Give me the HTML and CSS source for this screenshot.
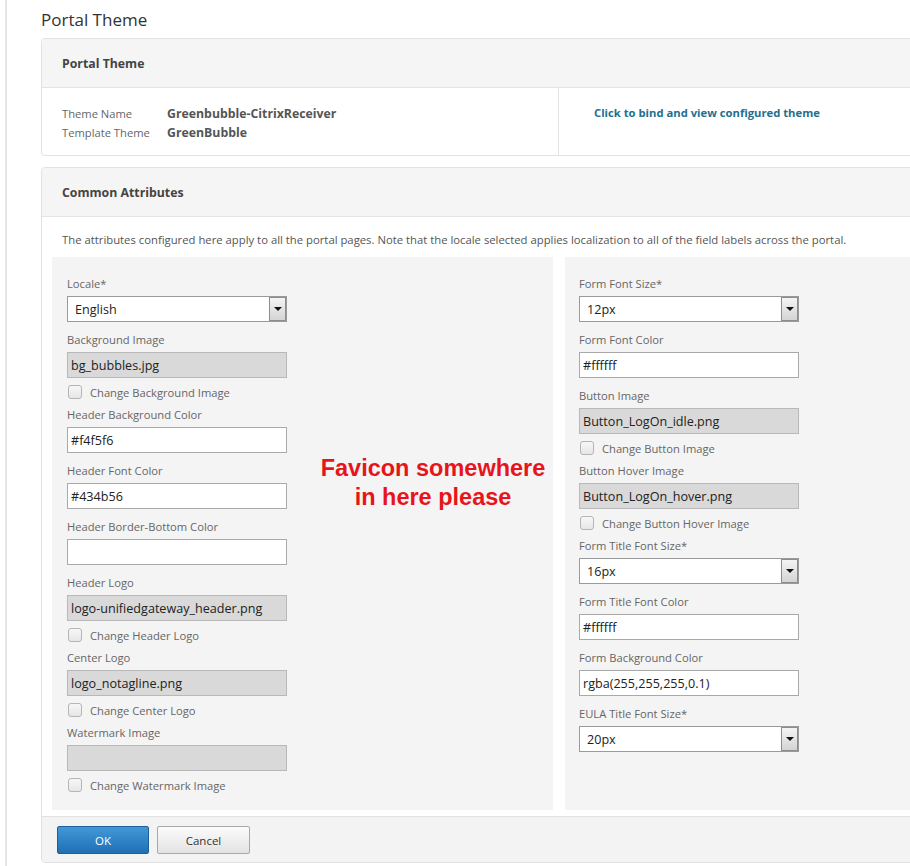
FILE: index.html
```html
<!DOCTYPE html>
<html>
<head>
<meta charset="utf-8">
<link rel="stylesheet" href="styles.css">
</head>
<body>
<div class="shell">
  <div class="rail"></div>
  <main class="main">
    <h1 class="page-title">Portal Theme</h1>

    <section class="panel">
      <header class="panel-head">Portal Theme</header>
      <div class="summary">
        <div class="info">
          <div class="info-row"><span class="k">Theme Name</span><span class="v">Greenbubble-CitrixReceiver</span></div>
          <div class="info-row"><span class="k">Template Theme</span><span class="v">GreenBubble</span></div>
        </div>
        <div class="bind"><a class="bind-link">Click to bind and view configured theme</a></div>
      </div>
    </section>

    <section class="panel panel-attrs">
      <header class="panel-head">Common Attributes</header>
      <p class="desc">The attributes configured here apply to all the portal pages. Note that the locale selected applies localization to all of the field labels across the portal.</p>
      <div class="cols">
        <div class="col col-left">
          <div class="field">
            <div class="label">Locale*</div>
            <div class="select"><span class="select-val">English</span><span class="select-btn"><span class="tri"></span></span></div>
          </div>
          <div class="field has-check">
            <div class="label">Background Image</div>
            <div class="input disabled">bg_bubbles.jpg</div>
            <label class="check"><span class="box"></span>Change Background Image</label>
          </div>
          <div class="field">
            <div class="label">Header Background Color</div>
            <div class="input">#f4f5f6</div>
          </div>
          <div class="field">
            <div class="label">Header Font Color</div>
            <div class="input">#434b56</div>
          </div>
          <div class="field">
            <div class="label">Header Border-Bottom Color</div>
            <div class="input"></div>
          </div>
          <div class="field has-check">
            <div class="label">Header Logo</div>
            <div class="input disabled">logo-unifiedgateway_header.png</div>
            <label class="check"><span class="box"></span>Change Header Logo</label>
          </div>
          <div class="field has-check">
            <div class="label">Center Logo</div>
            <div class="input disabled">logo_notagline.png</div>
            <label class="check"><span class="box"></span>Change Center Logo</label>
          </div>
          <div class="field has-check">
            <div class="label">Watermark Image</div>
            <div class="input disabled"></div>
            <label class="check"><span class="box"></span>Change Watermark Image</label>
          </div>
          <div class="note">Favicon somewhere<br>in here please</div>
        </div>
        <div class="col col-right">
          <div class="field">
            <div class="label">Form Font Size*</div>
            <div class="select"><span class="select-val">12px</span><span class="select-btn"><span class="tri"></span></span></div>
          </div>
          <div class="field">
            <div class="label">Form Font Color</div>
            <div class="input">#ffffff</div>
          </div>
          <div class="field has-check">
            <div class="label">Button Image</div>
            <div class="input disabled">Button_LogOn_idle.png</div>
            <label class="check"><span class="box"></span>Change Button Image</label>
          </div>
          <div class="field has-check">
            <div class="label">Button Hover Image</div>
            <div class="input disabled">Button_LogOn_hover.png</div>
            <label class="check"><span class="box"></span>Change Button Hover Image</label>
          </div>
          <div class="field">
            <div class="label">Form Title Font Size*</div>
            <div class="select"><span class="select-val">16px</span><span class="select-btn"><span class="tri"></span></span></div>
          </div>
          <div class="field">
            <div class="label">Form Title Font Color</div>
            <div class="input">#ffffff</div>
          </div>
          <div class="field">
            <div class="label">Form Background Color</div>
            <div class="input">rgba(255,255,255,0.1)</div>
          </div>
          <div class="field">
            <div class="label">EULA Title Font Size*</div>
            <div class="select"><span class="select-val">20px</span><span class="select-btn"><span class="tri"></span></span></div>
          </div>
        </div>
      </div>
      <footer class="panel-foot">
        <button class="btn btn-ok">OK</button>
        <button class="btn btn-cancel">Cancel</button>
      </footer>
    </section>
  </main>
</div>
</body>
</html>
```
FILE: styles.css
```css
html, body {
  margin: 0;
  padding: 0;
  background: #ffffff;
  overflow: hidden;
}
body {
  width: 910px;
  height: 866px;
  font-family: "Open Sans", "Noto Sans", sans-serif;
  color: #555;
}
.shell {
  display: flex;
  height: 866px;
}
.rail {
  width: 2px;
  margin-left: 5px;
  background: #e6e6e6;
  flex: none;
}
.main {
  margin-left: 34px;
  width: 900px;
  flex: none;
}
.page-title {
  margin: 0;
  height: 38px;
  line-height: 40px;
  font-size: 17px;
  font-weight: 400;
  color: #333;
}
.panel {
  border: 1px solid #e2e2e2;
  border-radius: 4px;
  background: #fff;
  margin-bottom: 11px;
}
.panel-head {
  height: 48px;
  line-height: 50px;
  background: #f5f5f5;
  border-bottom: 1px solid #e4e4e4;
  border-radius: 4px 4px 0 0;
  padding-left: 20px;
  font-size: 12.3px;
  font-weight: 700;
  color: #444;
}
.summary {
  display: flex;
  height: 67px;
}
.info {
  width: 496px;
  padding: 16px 0 0 20px;
  border-right: 1px solid #e4e4e4;
}
.info-row {
  display: flex;
  line-height: 19px;
  height: 19px;
}
.k {
  width: 105px;
  font-size: 11.2px;
  color: #666;
}
.v {
  font-size: 12.3px;
  font-weight: 700;
  color: #555;
}
.bind {
  padding: 14px 0 0 35px;
  line-height: 19px;
}
.bind-link {
  font-size: 11.25px;
  font-weight: 700;
  color: #23708f;
}
.desc {
  margin: 0;
  padding: 15px 0 0 20px;
  line-height: 16px;
  height: 16px;
  font-size: 11.3px;
  color: #555;
  white-space: nowrap;
  margin-bottom: 9px;
}
.cols {
  display: flex;
  gap: 12px;
  padding-left: 10px;
}
.col {
  background: #f4f4f4;
  padding: 19px 0 10px 15px;
}
.col-left {
  width: 486px;
  position: relative;
}
.col-right {
  flex: 1;
  padding-left: 14px;
}
.field {
  margin-bottom: 10px;
}
.label {
  line-height: 16px;
  height: 16px;
  font-size: 11.2px;
  color: #666;
  margin-bottom: 4px;
}
.input, .select {
  box-sizing: border-box;
  width: 220px;
  height: 26px;
  border: 1px solid #a9a9a9;
  background: #fff;
  font-size: 12.6px;
  line-height: 26px;
  color: #222;
  padding-left: 3px;
}
.input.disabled {
  background: #d9d9d9;
  border-color: #b8b8b8;
}
.select {
  display: flex;
  justify-content: space-between;
  padding-left: 7px;
  border-color: #9a9a9a;
}
.select-btn {
  box-sizing: border-box;
  width: 17px;
  height: 24px;
  border: 1px solid #8d8d8d;
  background: linear-gradient(#f4f4f4, #d4d4d4);
  display: flex;
  align-items: center;
  justify-content: center;
}
.tri {
  width: 0;
  height: 0;
  border-left: 4px solid transparent;
  border-right: 4px solid transparent;
  border-top: 4px solid #111;
}
.check {
  display: flex;
  align-items: center;
  height: 16px;
  margin-top: 6px;
  font-size: 11.2px;
  color: #666;
}
.box {
  box-sizing: border-box;
  width: 14px;
  height: 14px;
  border: 1px solid #b5b5b5;
  border-radius: 3px;
  background: linear-gradient(#f7f7f7, #e6e6e6);
  margin-left: 1px;
  margin-right: 8px;
}
.field.has-check {
  margin-bottom: 7px;
}
.note {
  position: absolute;
  left: 258px;
  top: 197px;
  width: 246px;
  text-align: center;
  font-family: "Liberation Sans", Arial, sans-serif;
  font-weight: 700;
  font-size: 23.5px;
  line-height: 29px;
  color: #e8141b;
}
.panel-foot {
  margin-top: 6px;
  border-top: 1px solid #e2e2e2;
  background: #f3f3f3;
  height: 46px;
  box-sizing: border-box;
  padding: 9px 0 0 15px;
  display: flex;
  gap: 8px;
  align-items: flex-start;
  border-radius: 0 0 4px 4px;
}
.btn {
  height: 28px;
  font-family: "Open Sans", "Noto Sans", sans-serif;
  font-size: 11.5px;
  border-radius: 2px;
  padding: 0;
  cursor: pointer;
}
.btn-ok {
  width: 92px;
  color: #fff;
  border: 1px solid #1f5f98;
  background: linear-gradient(#4298d6, #1f70b5);
}
.btn-cancel {
  width: 93px;
  color: #333;
  border: 1px solid #a8a8a8;
  background: linear-gradient(#fbfbfb, #e3e3e3);
}
```
